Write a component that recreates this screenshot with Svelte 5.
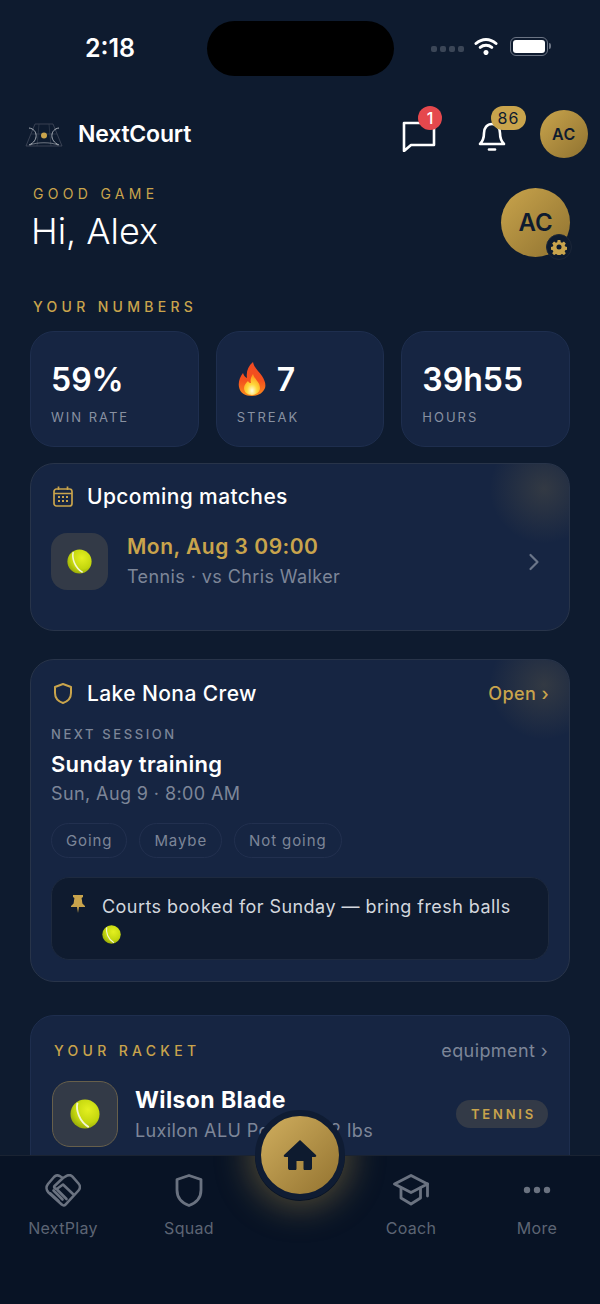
<script>
  const stats = [
    { value: '59%', label: 'WIN RATE' },
    { value: '7', label: 'STREAK', fire: true },
    { value: '39h55', label: 'HOURS' }
  ];
  const chips = ['Going', 'Maybe', 'Not going'];
</script>

{#snippet ball(size)}
  <svg class="ball" width={size} height={size} viewBox="0 0 32 32">
    <circle cx="16" cy="16" r="15.5" fill="url(#ballFill)" />
    <path d="M8 4 C6 12 10 24 20 30" fill="none" stroke="#f4f6d0" stroke-width="2" />
  </svg>
{/snippet}

<div class="app">
  <svg class="defs" width="0" height="0" aria-hidden="true">
    <defs>
      <radialGradient id="ballFill" cx="0.6" cy="0.35" r="0.75">
        <stop offset="0" stop-color="#e4f020" />
        <stop offset="0.6" stop-color="#c3d60e" />
        <stop offset="1" stop-color="#8c9f06" />
      </radialGradient>
      <linearGradient id="fireOuter" x1="0" y1="0" x2="0" y2="1">
        <stop offset="0" stop-color="#ef4a22" />
        <stop offset="0.55" stop-color="#f4511e" />
        <stop offset="1" stop-color="#fb8c1c" />
      </linearGradient>
      <radialGradient id="fireInner" cx="0.5" cy="0.8" r="0.7">
        <stop offset="0" stop-color="#fffde0" />
        <stop offset="0.45" stop-color="#ffd93b" />
        <stop offset="1" stop-color="#ff9a1c" />
      </radialGradient>
    </defs>
  </svg>

  <div class="status">
    <span class="time">2:18</span>
    <div class="island"></div>
    <div class="status-right">
      <div class="signal"><i></i><i></i><i></i><i></i></div>
      <svg width="24" height="18" viewBox="0 0 24 18" fill="none" stroke="#fff" stroke-width="3" stroke-linecap="round">
        <path d="M2 6.5 C8 1 16 1 22 6.5" />
        <path d="M6.2 10.4 C9.5 7.6 14.5 7.6 17.8 10.4" />
        <path d="M12 15.6 L12 15.6" stroke-width="5" />
      </svg>
      <div class="battery"><div class="battery-fill"></div></div>
    </div>
  </div>

  <div class="scroll">
    <header class="topbar">
      <svg class="logo" width="38" height="26" viewBox="0 0 38 26" fill="none">
        <path d="M1 25 L10 3 H28 L37 25 Z" stroke="#4a5263" stroke-width="0.7" />
        <path d="M14 3 L12 25 M24 3 L26 25 M6 13 H32" stroke="#3b4454" stroke-width="0.6" />
        <path d="M4 7 C13 8 14 20 4 24 M34 7 C25 8 24 20 34 24" stroke="#aab0b8" stroke-width="1" />
        <path d="M5 24 C12 21 26 21 33 24" stroke="#d5d8dc" stroke-width="0.8" opacity="0.6" />
        <circle cx="19" cy="14.5" r="3" fill="#c9a44c" />
      </svg>
      <span class="brand">NextCourt</span>
      <div class="top-actions">
        <div class="icon-btn chat">
          <svg width="34" height="32" viewBox="0 0 34 32" fill="none" stroke="#fff" stroke-width="2.6" stroke-linejoin="round">
            <path d="M2 3 H32 V25 H9 L2 31 Z" />
          </svg>
          <span class="badge red">1</span>
        </div>
        <div class="icon-btn bell">
          <svg width="28" height="32" viewBox="0 0 28 32" fill="none" stroke="#fff" stroke-width="2.6" stroke-linecap="round" stroke-linejoin="round">
            <path d="M2 24 C5 21 6 18 6 13 C6 8 9 4 14 4 C19 4 22 8 22 13 C22 18 23 21 26 24 Z" />
            <path d="M11 29.5 H17" />
          </svg>
          <span class="badge gold">86</span>
        </div>
        <div class="avatar small">AC</div>
      </div>
    </header>

    <section class="greeting">
      <div>
        <div class="eyebrow">GOOD GAME</div>
        <h1>Hi, Alex</h1>
      </div>
      <div class="avatar large">
        AC
        <span class="gear">
          <svg width="16" height="16" viewBox="0 0 24 24" fill="#c9a44c">
            <path fill-rule="evenodd" d="M10 1.5h4l.7 3.2 1.9.8 2.8-1.7 2.8 2.8-1.7 2.8.8 1.9 3.2.7v4l-3.2.7-.8 1.9 1.7 2.8-2.8 2.8-2.8-1.7-1.9.8-.7 3.2h-4l-.7-3.2-1.9-.8-2.8 1.7-2.8-2.8 1.7-2.8-.8-1.9-3.2-.7v-4l3.2-.7.8-1.9-1.7-2.8 2.8-2.8 2.8 1.7 1.9-.8zM12 8.2a3.8 3.8 0 1 0 0 7.6 3.8 3.8 0 0 0 0-7.6z" />
          </svg>
        </span>
      </div>
    </section>

    <div class="eyebrow numbers">YOUR NUMBERS</div>
    <div class="stats">
      {#each stats as stat}
        <div class="stat">
          <div class="stat-value">
            {#if stat.fire}
              <svg class="fire" width="28" height="34" viewBox="0 0 28 34">
                <path d="M15 0 C16 6 21 9 24 14 C27 19 28 22 27 26 C25 31 20 34 14 34 C7 34 2 31 1 25 C0 20 2 15 5 11 C6 14 7 15 9 16 C8 10 10 4 15 0 Z" fill="url(#fireOuter)" />
                <path d="M15 12 C16 17 22 20 22 26 C22 30 18 33 14 33 C9 33 6 30 6 26 C6 23 8 21 10 19 C11 21 12 21 13 21 C12 18 13 15 15 12 Z" fill="url(#fireInner)" />
              </svg>
            {/if}
            <span>{stat.value}</span>
          </div>
          <div class="stat-label">{stat.label}</div>
        </div>
      {/each}
    </div>

    <section class="card upcoming">
      <div class="card-title">
        <svg width="20" height="21" viewBox="0 0 20 21" fill="none" stroke="#c9a44c" stroke-width="1.7">
          <rect x="1" y="3" width="18" height="17" rx="2.5" />
          <path d="M1 7.5 H19 M5.5 0.5 V4 M14.5 0.5 V4" />
          <path d="M5 11 H7 M9 11 H11 M13 11 H15 M5 15 H7 M9 15 H11 M13 15 H15" stroke-width="1.8" />
        </svg>
        <span>Upcoming matches</span>
      </div>
      <div class="match">
        <div class="sport-box">{@render ball(25)}</div>
        <div class="match-text">
          <div class="match-date">Mon, Aug 3 09:00</div>
          <div class="muted">Tennis · vs Chris Walker</div>
        </div>
        <svg class="chevron" width="12" height="18" viewBox="0 0 12 18" fill="none" stroke="#6b7689" stroke-width="2.2" stroke-linecap="round" stroke-linejoin="round">
          <path d="M2.5 2 L9.5 9 L2.5 16" />
        </svg>
      </div>
    </section>

    <section class="card crew">
      <div class="crew-head">
        <div class="card-title">
          <svg width="20" height="21" viewBox="0 0 20 21" fill="none" stroke="#c9a44c" stroke-width="2" stroke-linejoin="round">
            <path d="M10 1 L18 4 V10 C18 15 14.5 18.5 10 20 C5.5 18.5 2 15 2 10 V4 Z" />
          </svg>
          <span>Lake Nona Crew</span>
        </div>
        <span class="open">Open ›</span>
      </div>
      <div class="session-label">NEXT SESSION</div>
      <div class="session-name">Sunday training</div>
      <div class="muted session-date">Sun, Aug 9 · 8:00 AM</div>
      <div class="chips">
        {#each chips as chip}
          <span class="chip">{chip}</span>
        {/each}
      </div>
      <div class="note">
        <svg class="pin" width="14" height="18" viewBox="0 0 14 18" fill="#c9a44c">
          <path d="M2 0 H12 V2 L10.6 3 L11.4 8.5 L14 11 V12 H8 L7 18 L6 12 H0 V11 L2.6 8.5 L3.4 3 L2 2 Z" />
        </svg>
        <p>Courts booked for Sunday — bring fresh balls {@render ball(19)}</p>
      </div>
    </section>

    <section class="card racket">
      <div class="racket-head">
        <span class="eyebrow">YOUR RACKET</span>
        <span class="equipment">equipment ›</span>
      </div>
      <div class="racket-row">
        <div class="sport-box outlined">{@render ball(30)}</div>
        <div class="racket-text">
          <div class="racket-name">Wilson Blade</div>
          <div class="muted">Luxilon ALU Power · 52 lbs</div>
        </div>
        <span class="sport-tag">TENNIS</span>
      </div>
    </section>
  </div>

  <div class="nav-wrap">
    <nav class="nav">
      <div class="glow"></div>
      <div class="nav-item">
        <svg width="36" height="33" viewBox="0 0 36 33" fill="none" stroke="#6a7280" stroke-width="2.6" stroke-linecap="round" stroke-linejoin="round">
          <path d="M18 4 L22 1.6 C24 .8 26 1 27.5 2.6 L33.5 9.5 C35.3 11.5 35.3 14.5 33.5 16.5 L20.5 30.6 C19.5 31.7 18 31.7 17 30.7 L3.5 18.5 C1 16 1 12.5 3 10 L9 3 C11 1 13.5 1 15.5 2.5 L18 4 L9.5 12 C8.5 13.5 10.5 15.6 12.5 14.5 L18 10.5 L28.5 20.5" />
          <path d="M8.5 16.5 L17.5 25.5 M12.5 16 L21.5 25 M5.5 19.5 L13.5 27" />
        </svg>
        <span>NextPlay</span>
      </div>
      <div class="nav-item">
        <svg width="36" height="33" viewBox="0 0 36 33" fill="none" stroke="#6a7280" stroke-width="2.8" stroke-linejoin="round">
          <path d="M18 1.5 L30 5.5 V16 C30 24 25 29 18 31.5 C11 29 6 24 6 16 V5.5 Z" />
        </svg>
        <span>Squad</span>
      </div>
      <div class="nav-gap"></div>
      <div class="nav-item">
        <svg width="36" height="33" viewBox="0 0 36 33" fill="none" stroke="#6a7280" stroke-width="2.8" stroke-linejoin="round" stroke-linecap="round">
          <path d="M1.5 10 L18 1.5 L34.5 10 L18 18.5 Z" />
          <path d="M8 14 V24 L18 30 L27.5 24 V14 M34.5 10 V22" />
        </svg>
        <span>Coach</span>
      </div>
      <div class="nav-item">
        <svg width="36" height="33" viewBox="0 0 36 33" fill="#6a7280">
          <circle cx="8" cy="16" r="3.2" /><circle cx="18" cy="16" r="3.2" /><circle cx="28" cy="16" r="3.2" />
        </svg>
        <span>More</span>
      </div>
    </nav>
    <div class="home">
      <svg width="34" height="32" viewBox="0 0 34 32" fill="#0e1b2f">
        <path d="M17 1 L33 16 C33.6 17 33 18 32 18 H29 V29 C29 30.5 28 31 27 31 H22 C21 31 20.5 30.5 20.5 29.5 V22 H13.5 V29.5 C13.5 30.5 13 31 12 31 H7 C6 31 5 30.5 5 29 V18 H2 C1 18 .4 17 1 16 Z" />
      </svg>
    </div>
  </div>
</div>

<style>
  :global(body) {
    margin: 0;
    background: #0e1b2f;
  }

  .app {
    position: relative;
    width: 600px;
    height: 1304px;
    overflow: hidden;
    display: flex;
    flex-direction: column;
    background: #0e1b2f;
    color: #fff;
    font-family: Inter, 'Liberation Sans', sans-serif;
  }

  .defs {
    position: absolute;
  }

  .status {
    flex: none;
    height: 76px;
    padding-top: 21px;
    box-sizing: border-box;
    display: flex;
    position: relative;
  }

  .time {
    position: absolute;
    left: 85px;
    top: 33px;
    font-size: 25px;
    line-height: 30px;
    font-weight: 600;
  }

  .island {
    width: 187px;
    height: 55px;
    margin-left: 207px;
    border-radius: 28px;
    background: #000;
  }

  .status-right {
    display: flex;
    align-items: center;
    margin-left: 37px;
    height: 50px;
    gap: 10px;
  }

  .signal {
    display: flex;
    gap: 3px;
    margin-top: 6px;
  }

  .signal i {
    width: 6px;
    height: 6px;
    border-radius: 2px;
    background: #3b4657;
  }

  .battery {
    position: relative;
    width: 38px;
    height: 19px;
    box-sizing: border-box;
    border: 1.5px solid #6b7484;
    border-radius: 6px;
    padding: 2px;
    margin-left: 2px;
  }

  .battery::after {
    content: '';
    position: absolute;
    right: -4px;
    top: 5px;
    width: 2px;
    height: 6px;
    border-radius: 0 2px 2px 0;
    background: #6b7484;
  }

  .battery-fill {
    width: 100%;
    height: 100%;
    border-radius: 3px;
    background: #fff;
  }

  .scroll {
    flex: 1;
    min-height: 0;
    overflow: hidden;
  }

  .topbar {
    display: flex;
    align-items: center;
    height: 48px;
    margin-top: 34px;
    padding: 0 12px 0 25px;
  }

  .brand {
    margin-left: 15px;
    font-size: 23px;
    font-weight: 600;
    letter-spacing: -0.2px;
  }

  .top-actions {
    margin-left: auto;
    display: flex;
    align-items: center;
  }

  .icon-btn {
    position: relative;
    display: flex;
  }

  .chat {
    margin-top: 4px;
    margin-right: 42px;
  }

  .bell {
    margin-top: 4px;
    margin-right: 34px;
  }

  .badge {
    position: absolute;
    display: flex;
    align-items: center;
    justify-content: center;
    height: 24px;
    font-size: 16px;
  }

  .badge.red {
    left: 16px;
    top: -14px;
    width: 24px;
    border-radius: 50%;
    background: #e5484d;
    color: #fff;
    font-weight: 500;
  }

  .badge.gold {
    left: 13px;
    top: -14px;
    width: 35px;
    border-radius: 12px;
    background: #c9a44c;
    color: #0e1b2f;
    letter-spacing: 1px;
  }

  .avatar {
    position: relative;
    display: flex;
    align-items: center;
    justify-content: center;
    flex: none;
    border-radius: 50%;
    background: linear-gradient(135deg, #c9a44c, #8f7230);
    color: #0e1b2f;
    font-weight: 600;
  }

  .avatar.small {
    width: 48px;
    height: 48px;
    font-size: 16px;
    letter-spacing: 0.5px;
  }

  .avatar.large {
    width: 69px;
    height: 69px;
    font-size: 24px;
  }

  .gear {
    position: absolute;
    right: -2px;
    bottom: -3px;
    width: 24px;
    height: 24px;
    display: flex;
    align-items: center;
    justify-content: center;
    border-radius: 50%;
    background: #0e1b2f;
    border: 1.5px solid #1b2638;
  }

  .greeting {
    display: flex;
    justify-content: space-between;
    align-items: flex-start;
    margin-top: 30px;
    padding: 0 30px 0 31px;
  }

  .greeting > div:first-child {
    padding-left: 2px;
    padding-top: -2px;
  }

  .eyebrow {
    font-size: 14px;
    line-height: 17px;
    letter-spacing: 4.3px;
    color: #c9a44c;
    font-weight: 500;
  }

  .greeting .eyebrow {
    font-weight: 400;
    margin-top: -3px;
  }

  h1 {
    margin: 7px 0 0 -2px;
    font-size: 36px;
    line-height: 44px;
    font-weight: 300;
  }

  .numbers {
    margin: 41px 0 0 33px;
  }

  .stats {
    display: grid;
    grid-template-columns: repeat(3, 1fr);
    gap: 17px;
    margin: 16px 30px 0;
  }

  .stat {
    height: 116px;
    box-sizing: border-box;
    padding: 28px 20px 0;
    border-radius: 24px;
    background: #162542;
    border: 1.5px solid #1e2e4e;
  }

  .stat-value {
    display: flex;
    align-items: center;
    height: 38px;
    font-size: 32px;
    font-weight: 600;
  }

  .fire {
    margin-right: 11px;
    margin-left: 1px;
  }

  .stat-label {
    margin-top: 11px;
    font-size: 13px;
    line-height: 16px;
    letter-spacing: 2px;
    color: #8891a1;
  }

  .card {
    position: relative;
    overflow: hidden;
    margin: 16px 30px 0;
    box-sizing: border-box;
    border-radius: 24px;
    background: #162542;
    border: 1.5px solid #283449;
  }

  .upcoming::after,
  .crew::after {
    content: '';
    position: absolute;
    right: -30px;
    top: -30px;
    width: 110px;
    height: 110px;
    border-radius: 50%;
    background: radial-gradient(circle, rgba(201, 164, 76, 0.16), rgba(201, 164, 76, 0) 70%);
    pointer-events: none;
  }

  .card-title {
    display: flex;
    align-items: center;
    gap: 14px;
    font-size: 21px;
    font-weight: 500;
    letter-spacing: 0.4px;
    color: #fff;
  }

  .upcoming {
    height: 168px;
    padding: 20px 20px 0 22px;
  }

  .match {
    display: flex;
    align-items: center;
    margin: 24px 0 0 -2px;
  }

  .sport-box {
    flex: none;
    width: 57px;
    height: 57px;
    display: flex;
    align-items: center;
    justify-content: center;
    border-radius: 16px;
    background: #333a47;
    box-sizing: border-box;
  }

  .ball {
    display: inline-block;
  }

  .match-text {
    margin-left: 19px;
  }

  .match-date {
    font-size: 21px;
    line-height: 26px;
    font-weight: 600;
    letter-spacing: 0.5px;
    color: #c9a44c;
  }

  .muted {
    font-size: 18px;
    line-height: 24px;
    letter-spacing: 0.4px;
    color: #7d8698;
  }

  .match .muted {
    margin-top: 5px;
  }

  .chevron {
    margin-left: auto;
    margin-right: 9px;
  }

  .crew {
    height: 323px;
    margin-top: 28px;
    padding: 21px 20px 0;
  }

  .crew-head {
    display: flex;
    justify-content: space-between;
    align-items: center;
    padding-left: 2px;
  }

  .open {
    font-size: 18px;
    font-weight: 500;
    letter-spacing: 0.4px;
    color: #c9a44c;
  }

  .session-label {
    margin-top: 20px;
    font-size: 13px;
    line-height: 16px;
    letter-spacing: 2.6px;
    color: #7d8698;
    font-weight: 500;
  }

  .session-name {
    margin-top: 8px;
    font-size: 22px;
    line-height: 28px;
    font-weight: 600;
    letter-spacing: 0.3px;
  }

  .session-date {
    margin-top: 4px;
  }

  .chips {
    display: flex;
    gap: 12px;
    margin-top: 17px;
  }

  .chip {
    display: flex;
    align-items: center;
    height: 35px;
    box-sizing: border-box;
    padding: 0 14px;
    border-radius: 18px;
    border: 1.5px solid #22304f;
    font-size: 15px;
    letter-spacing: 0.9px;
    color: #7d8698;
  }

  .note {
    display: flex;
    gap: 17px;
    height: 83px;
    box-sizing: border-box;
    margin-top: 19px;
    padding: 17px 18px 0 19px;
    border-radius: 18px;
    background: #0f1b2f;
    border: 1.5px solid #1e2a3f;
  }

  .pin {
    flex: none;
  }

  .note p {
    margin: 0;
    font-size: 18px;
    line-height: 27px;
    letter-spacing: 0.45px;
    color: #d3d7de;
    margin-top: -2px;
  }

  .note .ball {
    vertical-align: -4px;
  }

  .racket {
    height: 200px;
    margin-top: 33px;
    padding: 24px 21px 0 23px;
    border-color: #1e2e4e;
  }

  .racket-head {
    display: flex;
    justify-content: space-between;
    align-items: center;
  }

  .equipment {
    font-size: 18px;
    letter-spacing: 0.4px;
    color: #7d8698;
  }

  .racket-row {
    display: flex;
    align-items: center;
    margin: 20px 0 0 -2px;
  }

  .outlined {
    width: 66px;
    height: 66px;
    border-radius: 18px;
    border: 1.5px solid #675f4b;
  }

  .racket-text {
    margin-left: 17px;
  }

  .racket-name {
    font-size: 23px;
    line-height: 30px;
    font-weight: 700;
    letter-spacing: 0.4px;
  }

  .racket-text .muted {
    margin-top: 4px;
  }

  .sport-tag {
    margin-left: auto;
    height: 28px;
    padding: 0 12px 0 15px;
    display: flex;
    align-items: center;
    border-radius: 14px;
    background: #333a47;
    color: #c9a44c;
    font-size: 13px;
    font-weight: 600;
    letter-spacing: 2.8px;
  }

  .nav-wrap {
    position: relative;
    flex: none;
    height: 149px;
  }

  .nav {
    position: relative;
    height: 100%;
    box-sizing: border-box;
    overflow: hidden;
    display: flex;
    padding-top: 18px;
    background: #081325;
    border-top: 1.5px solid #1a2332;
  }

  .glow {
    position: absolute;
    left: 255px;
    top: -45px;
    width: 90px;
    height: 90px;
    border-radius: 50%;
    box-shadow: 0 0 34px 6px rgba(201, 164, 76, 0.38);
  }

  .nav-item {
    position: relative;
    flex: none;
    width: 126px;
    display: flex;
    flex-direction: column;
    align-items: center;
    gap: 11px;
    font-size: 16px;
    line-height: 20px;
    letter-spacing: 0.3px;
    color: #5d6574;
  }

  .nav-gap {
    flex: 1;
  }

  .home {
    position: absolute;
    left: 255px;
    top: -45px;
    width: 90px;
    height: 90px;
    box-sizing: border-box;
    display: flex;
    align-items: center;
    justify-content: center;
    border-radius: 50%;
    border: 6px solid #0f1c33;
    background: linear-gradient(135deg, #d0ae5e, #937330);
  }
</style>
